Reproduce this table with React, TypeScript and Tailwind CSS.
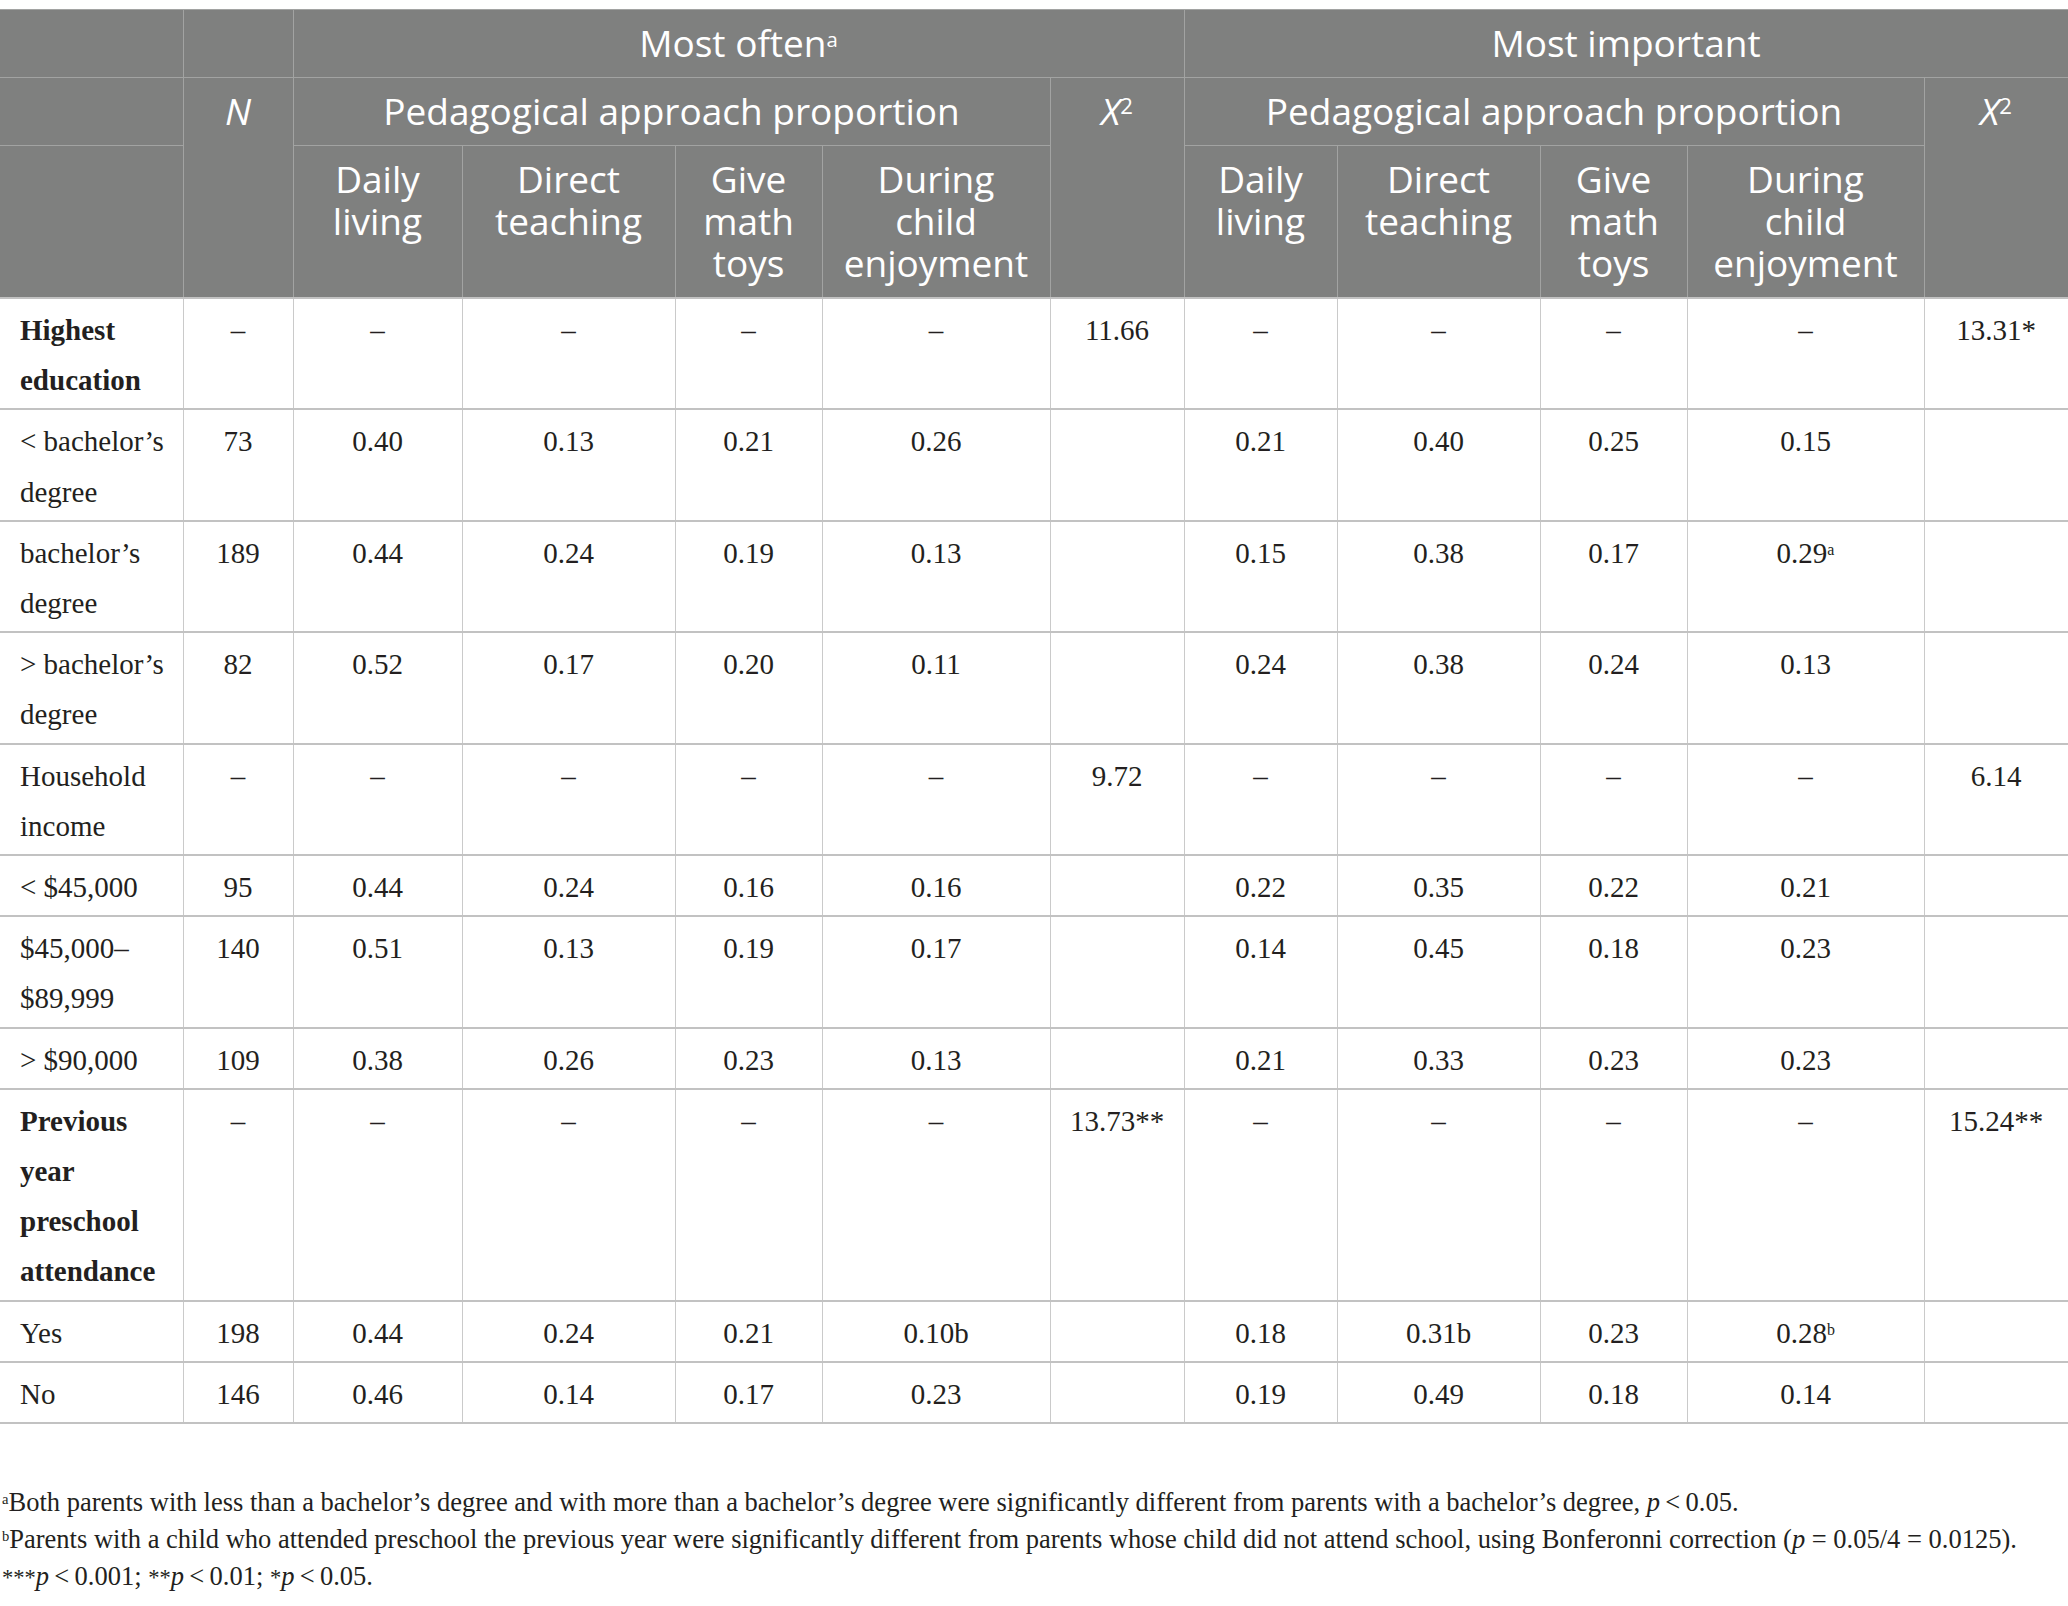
import React from "react";

const serif = { fontFamily: '"Liberation Serif", "Times New Roman", serif' };
const sans = { fontFamily: '"Open Sans", Lato, "Noto Sans", sans-serif' };

type Row = {
  label: React.ReactNode;
  bold?: boolean;
  cells: React.ReactNode[];
};

const D = "–";

const Sup = ({ children }: { children: React.ReactNode }) => (
  <sup className="text-[0.55em] leading-none">{children}</sup>
);

const rows: Row[] = [
  {
    label: (
      <>
        Highest
        <br />
        education
      </>
    ),
    bold: true,
    cells: [D, D, D, D, D, "11.66", D, D, D, D, "13.31*"],
  },
  {
    label: (
      <>
        &lt; bachelor’s
        <br />
        degree
      </>
    ),
    cells: ["73", "0.40", "0.13", "0.21", "0.26", "", "0.21", "0.40", "0.25", "0.15", ""],
  },
  {
    label: (
      <>
        bachelor’s
        <br />
        degree
      </>
    ),
    cells: [
      "189",
      "0.44",
      "0.24",
      "0.19",
      "0.13",
      "",
      "0.15",
      "0.38",
      "0.17",
      <>
        0.29<Sup>a</Sup>
      </>,
      "",
    ],
  },
  {
    label: (
      <>
        &gt; bachelor’s
        <br />
        degree
      </>
    ),
    cells: ["82", "0.52", "0.17", "0.20", "0.11", "", "0.24", "0.38", "0.24", "0.13", ""],
  },
  {
    label: (
      <>
        Household
        <br />
        income
      </>
    ),
    cells: [D, D, D, D, D, "9.72", D, D, D, D, "6.14"],
  },
  {
    label: <>&lt; $45,000</>,
    cells: ["95", "0.44", "0.24", "0.16", "0.16", "", "0.22", "0.35", "0.22", "0.21", ""],
  },
  {
    label: (
      <>
        $45,000–
        <br />
        $89,999
      </>
    ),
    cells: ["140", "0.51", "0.13", "0.19", "0.17", "", "0.14", "0.45", "0.18", "0.23", ""],
  },
  {
    label: <>&gt; $90,000</>,
    cells: ["109", "0.38", "0.26", "0.23", "0.13", "", "0.21", "0.33", "0.23", "0.23", ""],
  },
  {
    label: (
      <>
        Previous
        <br />
        year
        <br />
        preschool
        <br />
        attendance
      </>
    ),
    bold: true,
    cells: [D, D, D, D, D, "13.73**", D, D, D, D, "15.24**"],
  },
  {
    label: <>Yes</>,
    cells: [
      "198",
      "0.44",
      "0.24",
      "0.21",
      "0.10b",
      "",
      "0.18",
      "0.31b",
      "0.23",
      <>
        0.28<Sup>b</Sup>
      </>,
      "",
    ],
  },
  {
    label: <>No</>,
    cells: ["146", "0.46", "0.14", "0.17", "0.23", "", "0.19", "0.49", "0.18", "0.14", ""],
  },
];

const hc =
  "border border-[#a2a3a2] align-top text-center px-[4px] pt-[12px] pb-[13px] leading-[42px] font-normal";

const X2 = () => (
  <>
    <span className="italic">X</span>
    <sup className="text-[0.6em] leading-none">2</sup>
  </>
);

const HeadLines = ({ lines }: { lines: string[] }) => (
  <>
    {lines.map((l, i) => (
      <div key={i} className="h-[42px]">
        {l}
      </div>
    ))}
  </>
);

export default function App() {
  return (
    <div className="w-[2068px] bg-white pt-[9px] text-[#231f20]">
      <table className="table-fixed border-collapse w-[2068px]">
        <colgroup>
          <col className="w-[183px]" />
          <col className="w-[110px]" />
          <col className="w-[169px]" />
          <col className="w-[213px]" />
          <col className="w-[147px]" />
          <col className="w-[228px]" />
          <col className="w-[134px]" />
          <col className="w-[153px]" />
          <col className="w-[203px]" />
          <col className="w-[147px]" />
          <col className="w-[237px]" />
          <col className="w-[144px]" />
        </colgroup>
        <thead className="bg-[#7f807f] text-white text-[37px]" style={sans}>
          <tr>
            <th className={hc + " border-l-0"}></th>
            <th className={hc}></th>
            <th className={hc} colSpan={5}>
              Most often<Sup>a</Sup>
            </th>
            <th className={hc} colSpan={5}>
              Most important
            </th>
          </tr>
          <tr>
            <th className={hc + " border-l-0"}></th>
            <th className={hc} rowSpan={2}>
              <span className="italic">N</span>
            </th>
            <th className={hc} colSpan={4}>
              Pedagogical approach proportion
            </th>
            <th className={hc} rowSpan={2}>
              <X2 />
            </th>
            <th className={hc} colSpan={4}>
              Pedagogical approach proportion
            </th>
            <th className={hc} rowSpan={2}>
              <X2 />
            </th>
          </tr>
          <tr>
            <th className={hc + " border-l-0"}></th>
            <th className={hc}>
              <HeadLines lines={["Daily", "living"]} />
            </th>
            <th className={hc}>
              <HeadLines lines={["Direct", "teaching"]} />
            </th>
            <th className={hc}>
              <HeadLines lines={["Give", "math", "toys"]} />
            </th>
            <th className={hc}>
              <HeadLines lines={["During", "child", "enjoyment"]} />
            </th>
            <th className={hc}>
              <HeadLines lines={["Daily", "living"]} />
            </th>
            <th className={hc}>
              <HeadLines lines={["Direct", "teaching"]} />
            </th>
            <th className={hc}>
              <HeadLines lines={["Give", "math", "toys"]} />
            </th>
            <th className={hc}>
              <HeadLines lines={["During", "child", "enjoyment"]} />
            </th>
          </tr>
        </thead>
        <tbody className="text-[29px] leading-[50.2px]" style={serif}>
          {rows.map((r, i) => (
            <tr key={i}>
              <td
                className={
                  "border-x border-y-2 border-l-0 border-x-[#cacaca] border-y-[#c2c2c2] align-top text-left pl-[20px] pr-[6px] pt-[6px] pb-[3px] " +
                  (r.bold ? "font-bold" : "")
                }
              >
                {r.label}
              </td>
              {r.cells.map((c, j) => (
                <td
                  key={j}
                  className="border-x border-y-2 border-x-[#cacaca] border-y-[#c2c2c2] align-top text-center px-[4px] pt-[6px] pb-[3px] whitespace-nowrap"
                >
                  {c}
                </td>
              ))}
            </tr>
          ))}
        </tbody>
      </table>
      <div className="mt-[60px] text-[26.5px] leading-[37px] pl-[2px]" style={serif}>
        <p>
          <Sup>a</Sup>Both parents with less than a bachelor’s degree and with more than a
          bachelor’s degree were significantly different from parents with a bachelor’s degree,{" "}
          <span className="italic">p</span>&thinsp;&lt;&thinsp;0.05.
        </p>
        <p>
          <Sup>b</Sup>Parents with a child who attended preschool the previous year were
          significantly different from parents whose child did not attend school, using Bonferonni
          correction (<span className="italic">p</span>&nbsp;=&nbsp;0.05/4&nbsp;=&nbsp;0.0125).
        </p>
        <p>
          <span className="text-[0.85em]">***</span>
          <span className="italic">p</span>&thinsp;&lt;&thinsp;0.001;{" "}
          <span className="text-[0.85em]">**</span>
          <span className="italic">p</span>&thinsp;&lt;&thinsp;0.01;{" "}
          <span className="text-[0.85em]">*</span>
          <span className="italic">p</span>&thinsp;&lt;&thinsp;0.05.
        </p>
      </div>
    </div>
  );
}
